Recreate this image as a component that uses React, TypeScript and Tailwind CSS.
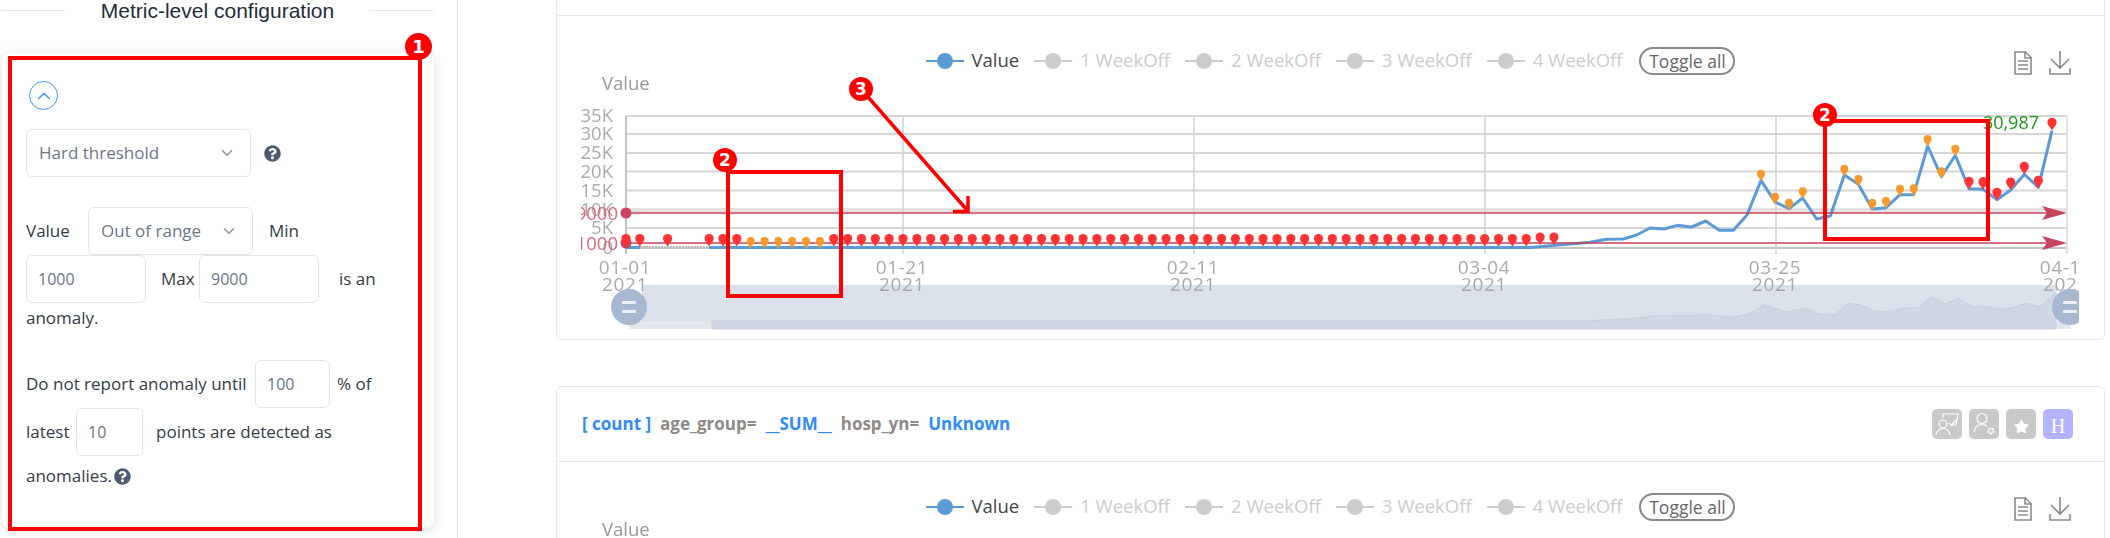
import { ChevronDown, ChevronUp } from "lucide-react";
import { FaQuestionCircle, FaStar } from "react-icons/fa";

const STEP = 13.85;
const X0 = 626;
const X_END = 2067;

const GRID = [
    { label: "35K", y: 116 },
    { label: "30K", y: 134 },
    { label: "25K", y: 153 },
    { label: "20K", y: 171.5 },
    { label: "15K", y: 190.5 },
    { label: "10K", y: 210 },
    { label: "5K", y: 228 },
    { label: "0", y: 248 },
];

const TICKS = [
    { label: "01-01", x: 626 },
    { label: "01-21", x: 903 },
    { label: "02-11", x: 1194 },
    { label: "03-04", x: 1485 },
    { label: "03-25", x: 1776 },
    { label: "04-15", x: 2067 },
];

// points read off the reference, x from 1590 and y from 0, at 3x
const toPage = (pts: number[][]) => pts.map(([x, y]) => [1590 + x / 3, y / 3]);

const LINE = toPage([
    [0, 727], [50, 718], [100, 717], [140, 705], [180, 684], [222, 687], [262, 676], [305, 681], [347, 663],
    [388, 691], [430, 691], [471, 645], [513, 541], [555, 606], [597, 626], [638, 594], [680, 657], [721, 648],
    [763, 525], [805, 553], [847, 627], [888, 623], [930, 584], [971, 584], [1013, 438], [1054, 530], [1096, 466],
    [1137, 566], [1179, 568], [1221, 599], [1262, 570], [1303, 523], [1345, 562], [1386, 392],
]);

const ORANGE_END = toPage([
    [513, 521], [555, 590], [597, 608], [638, 574], [763, 506], [805, 537], [847, 608], [888, 603], [930, 566],
    [971, 565], [1013, 417], [1054, 514], [1096, 446],
]);

const RED_END = toPage([
    [1137, 544], [1179, 545], [1221, 577], [1262, 546], [1303, 499], [1345, 541], [1386, 367],
]);

const MINI = toPage([
    [0, 962], [140, 955], [190, 948], [350, 945], [430, 952], [480, 940], [522, 914], [590, 935], [650, 926],
    [690, 943], [735, 943], [775, 910], [810, 915], [860, 935], [900, 933], [940, 925], [985, 924], [1022, 890],
    [1066, 912], [1105, 896], [1145, 919], [1190, 920], [1235, 928], [1270, 922], [1310, 910], [1350, 920], [1395, 880],
]);

const redFlat: number[] = [0, 1, 3, 6, 7, 8];
for (let i = 15; i <= 67; i++) redFlat.push(i);
const orangeFlat = [9, 10, 11, 12, 13, 14];

function Pin({ x, y, r = 4.6, fill }: { x: number; y: number; r?: number; fill: string }) {
    return (
        <g fill={fill}>
            <circle cx={x} cy={y} r={r} />
            <path d={`M${x - r + 0.6} ${y + 2}L${x} ${y + r + 3.5}L${x + r - 0.6} ${y + 2}Z`} />
        </g>
    );
}

function LimitLine({ y, label }: { y: number; label: string }) {
    return (
        <g>
            <line x1={X0} x2={2050} y1={y} y2={y} stroke="#c9415a" strokeWidth="1.5" />
            <circle cx={X0} cy={y} r="5.5" fill="#c8435c" />
            <path d={`M2042 ${y - 7}L2067 ${y}L2042 ${y + 7}L2047 ${y}Z`} fill="#c8435c" />
            <text x="618" y={y - 0.5} textAnchor="end" dominantBaseline="central" className="fill-[#d9687a] text-[18.5px]">
                {label}
            </text>
        </g>
    );
}

function Chart() {
    const linePath = LINE.map(([x, y]) => `${x},${y}`).join(" ");
    const miniPath = MINI.map(([x, y]) => `${x},${y}`).join(" ");
    return (
        <svg viewBox="557 75 1548 265" className="block h-[265px] w-[1548px] blur-[0.3px]">
            <defs>
                <clipPath id="chart-clip">
                    <rect x="581" y="75" width="1498" height="265" />
                </clipPath>
            </defs>
            <g clipPath="url(#chart-clip)">
                <text x="602" y="82" dominantBaseline="central" className="fill-[#999999] text-[18.5px]">
                    Value
                </text>

                {GRID.map((g) => (
                    <g key={g.label}>
                        <line
                            x1={X0}
                            x2={X_END}
                            y1={g.y}
                            y2={g.y}
                            stroke={g.label === "10K" ? "#e2e2e2" : g.label === "0" ? "#c4c4c4" : "#d6d6d6"}
                            strokeWidth={g.label === "10K" ? 4 : 2}
                        />
                        <text x="613" y={g.y - 1.5} textAnchor="end" dominantBaseline="central" className="fill-[#aaaaaa] text-[18.5px]">
                            {g.label}
                        </text>
                    </g>
                ))}

                {TICKS.map((t, i) => (
                    <line
                        key={t.label}
                        x1={t.x}
                        x2={t.x}
                        y1="116"
                        y2="254"
                        stroke={i === 0 ? "#c4c4c4" : i === 5 ? "#e2e2e2" : "#d0d0d0"}
                        strokeWidth={i === 0 || i === 5 ? 2 : 1.5}
                    />
                ))}

                <path d="M642 285H2057V329H642Z" fill="#dbe1ea" />
                <path d="M629 321H2071V329H629Z" fill="#e3e7ee" />
                <polygon points={`712,329 712,321 1590,321 ${miniPath} 2056,329`} fill="#d0d7e3" stroke="#c8d0dc" strokeWidth="1" />

                {TICKS.map((t) => (
                    <g key={t.label} className="fill-[#aaaaaa] text-[19px] tracking-[0.6px]">
                        <text x={t.x - 1} y="267" textAnchor="middle" dominantBaseline="central">
                            {t.label}
                        </text>
                        <text x={t.x - 1} y="284" textAnchor="middle" dominantBaseline="central">
                            2021
                        </text>
                    </g>
                ))}

                <line x1={X0} x2="640" y1="247.5" y2="247.5" stroke="#5b9bd5" strokeWidth="3" />
                <line x1="640" x2="709" y1="247" y2="247" stroke="#bdbdbd" strokeWidth="2" strokeDasharray="2 1" />
                <polyline
                    points={`709,247.5 1530,247.5 1553,245.5 ${linePath}`}
                    fill="none"
                    stroke="#5b9bd5"
                    strokeWidth="3"
                    strokeLinejoin="round"
                />

                <LimitLine y={213} label="9000" />
                <LimitLine y={243} label="1000" />

                {orangeFlat.map((i) => (
                    <Pin key={i} x={X0 + i * STEP} y={241} r={4} fill="#f7992b" />
                ))}
                {redFlat.map((i) => (
                    <Pin key={i} x={X0 + i * STEP} y={i > 65 ? 237 : 238.5} fill="#ff3333" />
                ))}
                {ORANGE_END.map(([x, y]) => (
                    <Pin key={x} x={x} y={y} r={4} fill="#f7992b" />
                ))}
                {RED_END.map(([x, y]) => (
                    <Pin key={x} x={x} y={y} fill="#ff3333" />
                ))}

                <text x="2039" y="122" textAnchor="end" dominantBaseline="central" className="fill-[#1a9a1a] text-[18px]">
                    30,987
                </text>

                <g>
                    <circle cx="629" cy="307" r="18" fill="#a7b8d0" />
                    <rect x="622" y="301" width="14" height="3" rx="1" fill="#eef1f6" />
                    <rect x="622" y="310" width="14" height="3" rx="1" fill="#eef1f6" />
                    <circle cx="2070" cy="307" r="18" fill="#a7b8d0" />
                    <rect x="2063" y="301" width="14" height="3" rx="1" fill="#eef1f6" />
                    <rect x="2063" y="310" width="14" height="3" rx="1" fill="#eef1f6" />
                </g>
            </g>
        </svg>
    );
}

function LegendItem({ label, active }: { label: string; active?: boolean }) {
    return (
        <div className="flex items-center gap-2">
            <div className="relative flex w-[38px] items-center justify-center">
                <div className={`h-[2px] w-full ${active ? "bg-[#5b9bd5]" : "bg-[#cccccc]"}`} />
                <div className={`absolute h-[16px] w-[16px] rounded-full ${active ? "bg-[#5b9bd5]" : "bg-[#cccccc]"}`} />
            </div>
            <span className={`-translate-y-px ${active ? "text-[#444444]" : "text-[#cccccc]"}`}>{label}</span>
        </div>
    );
}

function DocIcon() {
    return (
        <svg width="18" height="24" viewBox="0 0 18 24" fill="none" stroke="#8a8a8a" strokeWidth="1.6">
            <path d="M1 1H11.5L17 6.5V23H1Z" />
            <path d="M11 1V7H17M4 10H14M4 14H14M4 18H14" />
        </svg>
    );
}

function DownloadIcon() {
    return (
        <svg width="22" height="24" viewBox="0 0 22 24" fill="none" stroke="#8a8a8a" strokeWidth="1.6">
            <path d="M11 0V17M2 8L11 17L20 8" />
            <path d="M1 17V23H21V17" />
        </svg>
    );
}

function ChartBody() {
    return (
        <div className="pt-[31px]">
            <div className="relative flex h-[28px] items-center justify-center gap-[15px] text-[18.5px]">
                <LegendItem label="Value" active />
                <LegendItem label="1 WeekOff" />
                <LegendItem label="2 WeekOff" />
                <LegendItem label="3 WeekOff" />
                <LegendItem label="4 WeekOff" />
                <div className="ml-[2px] flex h-[28px] w-[96px] items-center justify-center rounded-full border-2 border-[#8a8a8a] text-[17.5px] text-[#666666]">
                    Toggle all
                </div>
                <div className="absolute right-[33px] top-[4px] flex gap-[17px]">
                    <DocIcon />
                    <DownloadIcon />
                </div>
            </div>
            <Chart />
        </div>
    );
}

function ActionBadge({ children, purple }: { children: React.ReactNode; purple?: boolean }) {
    return (
        <div
            className={`flex h-[30px] w-[30px] items-center justify-center rounded-[5px] text-white ${
                purple ? "bg-[#b3b3ff]" : "bg-[#c9c9c9]"
            }`}
        >
            {children}
        </div>
    );
}

function Select({ label, width }: { label: string; width: string }) {
    return (
        <div className={`flex h-[48px] shrink-0 items-center justify-between rounded-[6px] border border-[#e2e4e9] pl-[12px] pr-[14px] text-[#6b7688] ${width}`}>
            <span>{label}</span>
            <ChevronDown size={18} strokeWidth={2} className="text-[#8a93a3]" />
        </div>
    );
}

function NumberBox({ value, width }: { value: string; width: string }) {
    return (
        <div className={`flex h-[48px] shrink-0 items-center rounded-[6px] border border-[#e2e4e9] pl-[11px] text-[16px] text-[#6b7688] ${width}`}>
            {value}
        </div>
    );
}

function ConfigPanel() {
    return (
        <aside className="h-full w-[458px] shrink-0 border-r border-[#e4e4e4] pl-[1px]">
            <div className="flex h-[21px] w-[433px] items-center gap-[36px] font-['Liberation_Sans',sans-serif] text-[21px] text-[#1f2d3d]">
                <div className="h-px flex-1 bg-[#e8e8e8]" />
                <span className="shrink-0">Metric-level configuration</span>
                <div className="h-px flex-1 bg-[#e8e8e8]" />
            </div>
            <div className="ml-[1px] mt-[32px] h-[475px] w-[432px] rounded-[8px] bg-white pl-[24px] pt-[28px] text-[17px] text-[#333c4a] shadow-[0_2px_12px_rgba(0,0,0,0.14)]">
                <div className="ml-[3px] flex h-[29px] w-[29px] items-center justify-center rounded-full border border-[#3b99fc] text-[#3b99fc]">
                    <ChevronUp size={22} strokeWidth={1.5} />
                </div>
                <div className="mt-[19px] flex items-center gap-[13px]">
                    <Select label="Hard threshold" width="w-[225px]" />
                    <FaQuestionCircle size={17} className="text-[#4e5a72]" />
                </div>
                <div className="mt-[30px] flex items-center">
                    <span className="w-[62px]">Value</span>
                    <Select label="Out of range" width="w-[165px]" />
                    <span className="ml-[16px]">Min</span>
                </div>
                <div className="flex items-center">
                    <NumberBox value="1000" width="w-[120px]" />
                    <span className="ml-[15px] w-[38px]">Max</span>
                    <NumberBox value="9000" width="w-[120px]" />
                    <span className="ml-[20px]">is an</span>
                </div>
                <div className="mt-[3px] leading-[24px]">anomaly.</div>
                <div className="mt-[30px] flex items-center">
                    <span className="w-[229px]">Do not report anomaly until</span>
                    <NumberBox value="100" width="w-[75px]" />
                    <span className="ml-[7px]">% of</span>
                </div>
                <div className="flex items-center">
                    <span className="w-[50px]">latest</span>
                    <NumberBox value="10" width="w-[67px]" />
                    <span className="ml-[13px]">points are detected as</span>
                </div>
                <div className="mt-[8px] flex items-center gap-[2px] leading-[24px]">
                    <span>anomalies.</span>
                    <FaQuestionCircle size={17} className="text-[#4e5a72]" />
                </div>
            </div>
        </aside>
    );
}

function Annotations() {
    const badge = "absolute flex items-center justify-center rounded-full bg-[#ff0000] font-['DejaVu_Sans',sans-serif] font-bold leading-none text-white";
    return (
        <>
            <div className="absolute left-[8px] top-[56px] h-[475px] w-[414px] border-4 border-[#ff0000]" />
            <div className={`${badge} left-[405px] top-[33px] h-[27px] w-[27px] text-[18px]`}>1</div>

            <div className="absolute left-[726px] top-[170px] h-[128px] w-[117px] border-4 border-[#ff0000]" />
            <div className={`${badge} left-[713px] top-[148px] h-[24px] w-[24px] text-[17px]`}>2</div>

            <div className="absolute left-[1823px] top-[119px] h-[122px] w-[167px] border-4 border-[#ff0000]" />
            <div className={`${badge} left-[1813px] top-[103px] h-[24px] w-[24px] text-[17px]`}>2</div>

            <svg className="absolute left-[850px] top-[80px]" width="130" height="140" viewBox="850 80 130 140" fill="none" stroke="#ff0000" strokeWidth="3.5">
                <path d="M861 89L967 210" />
                <path d="M968 196V211.5H953" />
            </svg>
            <div className={`${badge} left-[849px] top-[77px] h-[24px] w-[24px] text-[17px]`}>3</div>
        </>
    );
}

export default function App() {
    return (
        <div className="relative flex h-[538px] w-[2110px] overflow-hidden bg-white font-['Open_Sans',sans-serif]">
            <ConfigPanel />
            <main className="min-w-0 flex-1 pl-[98px] pr-[5px]">
                <section className="h-[340px] rounded-b-[6px] border-x border-b border-[#e8e8e8]">
                    <div className="h-[16px] border-b border-[#e8e8e8]" />
                    <ChartBody />
                </section>
                <section className="mt-[46px] rounded-t-[6px] border border-[#e8e8e8]">
                    <div className="flex h-[75px] items-center justify-between border-b border-[#e8e8e8] pl-[25px] pr-[31px] text-[17px] font-bold">
                        <div className="flex gap-[9px] text-[#2f8bf5]">
                            <span>[ count ]</span>
                            <span className="text-[#8f8a85]">age_group=</span>
                            <span>__SUM__</span>
                            <span className="text-[#8f8a85]">hosp_yn=</span>
                            <span>Unknown</span>
                        </div>
                        <div className="flex gap-[7px]">
                            <ActionBadge>
                                <svg width="26" height="26" viewBox="0 0 26 26" fill="none" stroke="white" strokeWidth="1.2">
                                    <path d="M9 7V3H24L22 14H17" />
                                    <path d="M15 12L17.5 14.5L22 9" />
                                    <circle cx="9" cy="13" r="4" />
                                    <path d="M2 24C3 19 6 17.5 9 17.5C12 17.5 15 19 16 24" />
                                </svg>
                            </ActionBadge>
                            <ActionBadge>
                                <svg width="26" height="26" viewBox="0 0 26 26" fill="none" stroke="white" strokeWidth="1.2">
                                    <circle cx="11" cy="7.5" r="5" />
                                    <path d="M3 21C4 15.5 7 13.5 11 13.5C13 13.5 15 14 16 15.5" />
                                    <circle cx="20" cy="20" r="2.5" strokeWidth="2" strokeDasharray="2 1" />
                                </svg>
                            </ActionBadge>
                            <ActionBadge>
                                <FaStar size={15} className="mt-[4px]" />
                            </ActionBadge>
                            <ActionBadge purple>
                                <span className="mt-[3px] font-['Liberation_Serif',serif] text-[20px] font-normal">H</span>
                            </ActionBadge>
                        </div>
                    </div>
                    <ChartBody />
                </section>
            </main>
            <Annotations />
        </div>
    );
}
